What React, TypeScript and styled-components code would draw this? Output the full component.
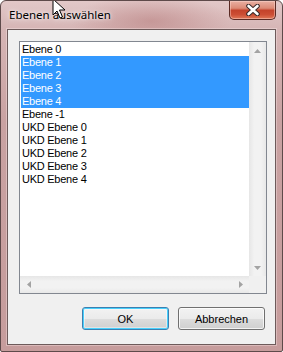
import React from "react";
import styled, { createGlobalStyle } from "styled-components";

const GlobalStyle = createGlobalStyle`
  html, body {
    margin: 0;
    padding: 0;
    background: #ffffff;
  }
`;

const Window = styled.div`
  position: relative;
  box-sizing: border-box;
  width: 283px;
  height: 352px;
  display: flex;
  flex-direction: column;
  padding: 0 6px 6px 6px;
  border: 1px solid #5e4a4a;
  border-radius: 6px 6px 2px 2px;
  background: radial-gradient(
      ellipse 80px 26px at 150px 20px,
      rgba(175, 110, 110, 0.45),
      rgba(175, 110, 110, 0)
    ),
    linear-gradient(180deg, #e2c8c8 0px, #d6b5b5 28px, #c9a2a2 120px, #c69c9c 100%);
  overflow: hidden;
`;

const TitleBar = styled.div`
  height: 28px;
  display: flex;
  align-items: flex-start;
  justify-content: space-between;
`;

const Title = styled.span`
  margin-top: 6px;
  padding-left: 2px;
  font-family: "Noto Sans", "Open Sans", sans-serif;
  font-size: 11.5px;
  color: #000000;
  text-shadow: 0 0 6px rgba(255, 255, 255, 0.9), 0 0 3px rgba(255, 255, 255, 0.7);
`;

const CloseButton = styled.div`
  box-sizing: border-box;
  width: 47px;
  height: 19px;
  display: flex;
  align-items: center;
  justify-content: center;
  border: 1px solid #5a2a24;
  border-top: none;
  border-radius: 0 0 5px 5px;
  background: linear-gradient(
    180deg,
    #e9b0a3 0%,
    #dc8a76 40%,
    #c4432b 52%,
    #cc4e34 75%,
    #e07858 100%
  );
  box-shadow: inset 0 0 0 1px rgba(255, 220, 210, 0.45);
`;

const Client = styled.div`
  flex: 1;
  display: flex;
  flex-direction: column;
  padding: 11px 8px 14px 11px;
  border: 1px solid #6d5a5a;
  background: #f0f0f0;
  box-shadow: 0 0 0 1px rgba(255, 240, 240, 0.35);
`;

const ListBox = styled.div`
  box-sizing: border-box;
  width: 248px;
  height: 253px;
  border: 1px solid #828790;
  background: #ffffff;
  display: grid;
  grid-template-columns: 1fr 17px;
  grid-template-rows: 1fr 17px;
`;

const Items = styled.div`
  padding: 1px 0 0 1px;
  overflow: hidden;
`;

const Row = styled.div<{ $selected?: boolean }>`
  height: 13px;
  line-height: 13px;
  padding-left: 1px;
  font-family: "Liberation Sans", Arial, sans-serif;
  font-size: 11px;
  letter-spacing: -0.25px;
  white-space: nowrap;
  color: ${({ $selected }) => ($selected ? "#ffffff" : "#000000")};
  background: ${({ $selected }) => ($selected ? "#3399ff" : "transparent")};
`;

const ScrollBar = styled.div<{ $horizontal?: boolean }>`
  display: flex;
  flex-direction: ${({ $horizontal }) => ($horizontal ? "row" : "column")};
  justify-content: space-between;
  background: ${({ $horizontal }) =>
    $horizontal
      ? "linear-gradient(180deg, #e6e6e6 0%, #f2f2f2 30%, #f2f2f2 70%, #e8e8e8 100%)"
      : "linear-gradient(90deg, #e6e6e6 0%, #f2f2f2 30%, #f2f2f2 70%, #e8e8e8 100%)"};
`;

const ArrowBox = styled.div`
  width: 17px;
  height: 17px;
  display: flex;
  align-items: center;
  justify-content: center;
`;

const Corner = styled.div`
  background: #f0f0f0;
`;

const ButtonRow = styled.div`
  margin-top: 13px;
  padding-right: 2px;
  display: flex;
  justify-content: flex-end;
  gap: 9px;
`;

const Button = styled.div<{ $default?: boolean }>`
  box-sizing: border-box;
  width: 87px;
  height: 23px;
  display: flex;
  align-items: center;
  justify-content: center;
  border: 1px solid ${({ $default }) => ($default ? "#3c7fb1" : "#707070")};
  border-radius: 3px;
  background: linear-gradient(180deg, #f2f2f2 0%, #ebebeb 50%, #dddddd 50%, #cfcfcf 100%);
  box-shadow: ${({ $default }) =>
    $default
      ? "inset 0 0 0 1px #48d0fc, inset 0 0 0 2px rgba(255,255,255,0.4)"
      : "inset 0 0 0 1px rgba(255,255,255,0.75)"};
  font-family: "Liberation Sans", Arial, sans-serif;
  font-size: 11px;
  color: #000000;
`;

const Cursor = styled.svg`
  position: absolute;
  left: 51px;
  top: -3px;
`;

type Dir = "up" | "down" | "left" | "right";

function Arrow({ dir }: { dir: Dir }) {
  const points: Record<Dir, string> = {
    up: "0,4 3.5,0 7,4",
    down: "0,0 3.5,4 7,0",
    left: "4,0 0,3.5 4,7",
    right: "0,0 4,3.5 0,7",
  };
  const vertical = dir === "up" || dir === "down";
  return (
    <svg width={vertical ? 7 : 4} height={vertical ? 4 : 7}>
      <polygon points={points[dir]} fill="#a3a3a3" />
    </svg>
  );
}

const rows = [
  { label: "Ebene 0" },
  { label: "Ebene 1", selected: true },
  { label: "Ebene 2", selected: true },
  { label: "Ebene 3", selected: true },
  { label: "Ebene 4", selected: true },
  { label: "Ebene -1" },
  { label: "UKD Ebene 0" },
  { label: "UKD Ebene 1" },
  { label: "UKD Ebene 2" },
  { label: "UKD Ebene 3" },
  { label: "UKD Ebene 4" },
];

export default function App() {
  return (
    <>
      <GlobalStyle />
      <Window>
        <TitleBar>
          <Title>Ebenen auswählen</Title>
          <CloseButton>
            <svg width="14" height="12" viewBox="0 0 14 12">
              <path d="M2.5 2 L11.5 10 M11.5 2 L2.5 10" stroke="#3a2a2a" strokeWidth="4.6" strokeLinecap="round" />
              <path d="M2.5 2 L11.5 10 M11.5 2 L2.5 10" stroke="#ffffff" strokeWidth="2.6" strokeLinecap="round" />
            </svg>
          </CloseButton>
        </TitleBar>
        <Client>
          <ListBox>
            <Items>
              {rows.map((r) => (
                <Row key={r.label} $selected={r.selected}>
                  {r.label}
                </Row>
              ))}
            </Items>
            <ScrollBar>
              <ArrowBox>
                <Arrow dir="up" />
              </ArrowBox>
              <ArrowBox>
                <Arrow dir="down" />
              </ArrowBox>
            </ScrollBar>
            <ScrollBar $horizontal>
              <ArrowBox>
                <Arrow dir="left" />
              </ArrowBox>
              <ArrowBox>
                <Arrow dir="right" />
              </ArrowBox>
            </ScrollBar>
            <Corner />
          </ListBox>
          <ButtonRow>
            <Button $default>OK</Button>
            <Button>Abbrechen</Button>
          </ButtonRow>
        </Client>
        <Cursor width="14" height="22" viewBox="0 0 14 22">
          <path d="M1 1 L1 17 L5 13 L8 20 L10.5 19 L7.5 12 L13 12 Z" fill="#ffffff" stroke="#000000" strokeWidth="1" />
        </Cursor>
      </Window>
    </>
  );
}
